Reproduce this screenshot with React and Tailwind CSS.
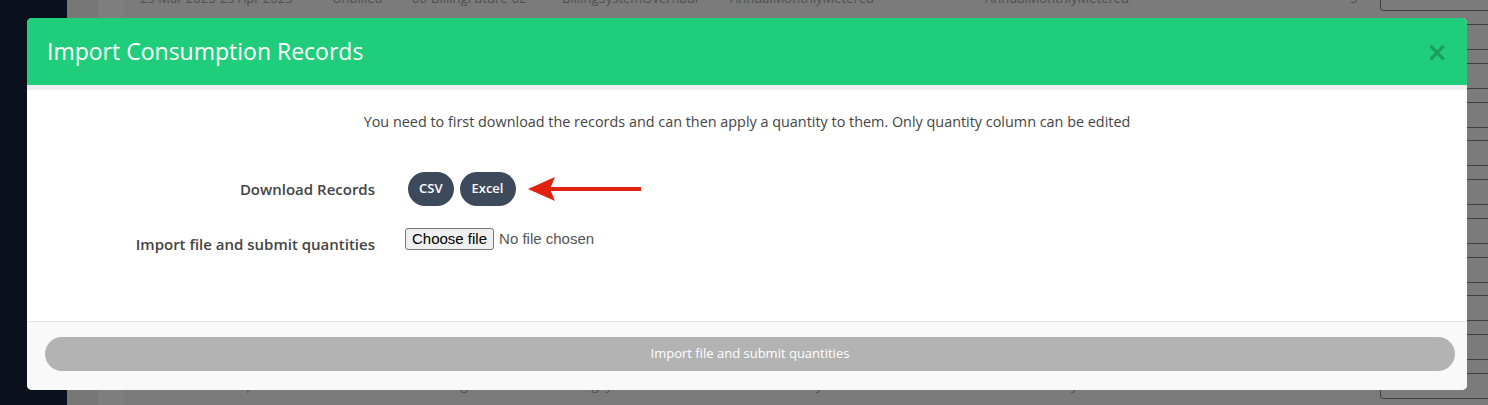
const rows = Array.from({ length: 11 });

const BackgroundTable = () => (
  <div className="flex h-[405px] w-[1488px] overflow-hidden bg-[#7b7b7b]">
    {/* sidebar */}
    <div className="w-[67px] shrink-0 bg-[#0a111d]" />
    <div className="w-[31px] shrink-0 bg-[#777777]" />
    <div className="w-[26px] shrink-0 bg-[#7f7f7f]" />
    {/* table rows, dimmed by the overlay */}
    <div className="-mt-[21px] flex flex-col">
      {rows.map((_, i) => (
        <div
          key={i}
          className="flex h-[41px] items-center pl-[16px] text-[13px] text-[#4f4f4f] [font-family:'Open_Sans',sans-serif]"
        >
          <span className="w-[192px]">25 Mar 2025-25 Apr 2025</span>
          <span className="w-[80px]">Unbilled</span>
          <span className="w-[150px]">00-BillingFuture-02</span>
          <span className="w-[168px]">BillingSystemOverhaul</span>
          <span className="w-[255px]">AnnualMonthlyMetered</span>
          <span className="w-[365px]">AnnualMonthlyMetered</span>
          <span className="w-[30px]">5</span>
          <span className="h-[26px] w-[120px] rounded-[3px] border border-[#3f3f3f]" />
        </div>
      ))}
    </div>
  </div>
);

const RedArrow = () => (
  <svg width="114" height="26" viewBox="0 0 114 26" className="ml-[12px]">
    <line x1="20" y1="13" x2="113" y2="13" stroke="#e0230f" strokeWidth="4" />
    <path d="M0 13 L27 1 L22 13 L27 25 Z" fill="#e0230f" />
  </svg>
);

export default function App() {
  return (
    <div className="relative h-[405px] w-[1488px] overflow-hidden">
      <BackgroundTable />

      {/* Modal */}
      <div className="absolute left-[27px] top-[18px] w-[1440px] overflow-hidden rounded-[5px] bg-white [font-family:'Open_Sans',sans-serif]">
        <div className="flex h-[67px] items-center justify-between bg-[#20cd7b] pl-[20px] pr-[19px]">
          <h1 className="text-[23px] font-normal text-white">Import Consumption Records</h1>
          <span className="text-[26px] font-bold leading-none text-[#189e5e] [font-family:'DejaVu_Sans',sans-serif]">
            ×
          </span>
        </div>
        <div className="h-[5px] bg-[#eeeeee]" />

        <div className="h-[231px] pt-[22px]">
          <p className="text-center text-[14.4px] leading-[20px] text-[#444444]">
            You need to first download the records and can then apply a quantity to them. Only quantity column can be edited
          </p>

          <div className="mt-[40px] flex h-[34px] items-center">
            <label className="w-[348px] text-right text-[15px] font-semibold text-[#444444]">Download Records</label>
            <div className="ml-[33px] flex gap-[6px]">
              <button className="h-[34px] rounded-full bg-[#3d4a5c] px-[11px] text-[13px] font-semibold text-white">
                CSV
              </button>
              <button className="h-[34px] rounded-full bg-[#3d4a5c] px-[12px] text-[13px] font-semibold text-white">
                Excel
              </button>
            </div>
            <RedArrow />
          </div>

          <div className="mt-[22px] flex items-start">
            <label className="w-[348px] pt-[6px] text-right text-[15px] font-semibold leading-[20px] text-[#444444]">
              Import file and submit quantities
            </label>
            <div className="ml-[30px] flex items-center [font-family:'Liberation_Sans',Arial,sans-serif]">
              <span className="flex h-[22px] items-center rounded-[3px] border border-[#767676] bg-[#efefef] px-[6px] text-[15px] text-black">
                Choose file
              </span>
              <span className="ml-[5px] text-[15px] text-[#555555]">No file chosen</span>
            </div>
          </div>
        </div>

        <div className="h-[69px] border-t border-[#e5e5e5] bg-[#f9f9f9] pl-[18px] pr-[12px] pt-[15px]">
          <button className="h-[34px] w-full rounded-full bg-[#b3b3b3] text-[13px] text-white">
            Import file and submit quantities
          </button>
        </div>
      </div>
    </div>
  );
}
